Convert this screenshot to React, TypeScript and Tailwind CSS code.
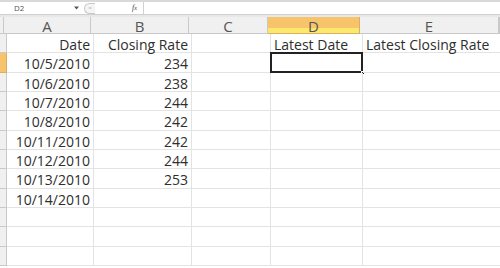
import React from "react";

const cols = [4, 87, 98, 79, 92, 139, 1];
const colLetters = ["", "A", "B", "C", "D", "E", ""];
const rowHeights = [19, 20, 19, 19, 20, 19, 19, 20, 19, 19, 20, 19];

type Cell = { t: string; align?: "left" | "right" };
const data: Record<number, Record<number, Cell>> = {
  0: { 1: { t: "Date", align: "right" }, 2: { t: "Closing Rate", align: "right" }, 4: { t: "Latest Date", align: "left" }, 5: { t: "Latest Closing Rate", align: "left" } },
  1: { 1: { t: "10/5/2010", align: "right" }, 2: { t: "234", align: "right" } },
  2: { 1: { t: "10/6/2010", align: "right" }, 2: { t: "238", align: "right" } },
  3: { 1: { t: "10/7/2010", align: "right" }, 2: { t: "244", align: "right" } },
  4: { 1: { t: "10/8/2010", align: "right" }, 2: { t: "242", align: "right" } },
  5: { 1: { t: "10/11/2010", align: "right" }, 2: { t: "242", align: "right" } },
  6: { 1: { t: "10/12/2010", align: "right" }, 2: { t: "244", align: "right" } },
  7: { 1: { t: "10/13/2010", align: "right" }, 2: { t: "253", align: "right" } },
  8: { 1: { t: "10/14/2010", align: "right" } },
};

export default function App() {
  return (
    <div
      className="w-[500px] h-[268px] overflow-hidden bg-white"
      style={{ fontFamily: '"Open Sans", "Noto Sans", sans-serif' }}
    >
      {/* formula bar */}
      <div className="h-[2px] bg-[#d9d9d9]" />
      <div className="flex h-[13px] items-center bg-white border-b border-[#d0d0d0]">
        <div className="w-[84px] h-full flex items-center justify-between pl-[14px] pr-[5px]">
          <span className="text-[8px] leading-none text-[#555]">D2</span>
          <svg width="5" height="4" viewBox="0 0 5 4"><path d="M0 0.5 L5 0.5 L2.5 3.5 Z" fill="#555" /></svg>
        </div>
        <div className="w-[59px] h-full flex items-center">
          <div className="h-[11px] w-[11px] rounded-l-full border-l border-y border-[#c8c8c8] bg-[#f4f4f4] flex items-center justify-center">
            <span className="text-[6px] leading-none text-[#bbb]">=</span>
          </div>
          <div className="flex-1" />
          <span className="text-[8px] italic leading-none text-[#444] pr-[6px]" style={{ fontFamily: '"Liberation Serif", serif' }}>
            f<span className="text-[6px]">x</span>
          </span>
        </div>
        <div className="flex-1 h-full border-l border-[#d0d0d0]" />
      </div>
      <div className="h-[2px] bg-[#e8e8e8]" />
      {/* column header */}
      <div className="flex h-[17px]">
        {cols.map((w, i) => {
          const sel = i === 4;
          return (
            <div
              key={i}
              style={{ width: w }}
              className={
                "shrink-0 h-full flex items-center justify-center border-r border-b text-[15px] leading-[16px] text-[#555] " +
                (sel
                  ? "border-[#d8b060] bg-[linear-gradient(to_bottom,#f7c46c_0px,#f7c46c_11px,#fde86e_11px,#fde86e_100%)]"
                  : "border-[#c9c9c9] bg-[#f0f0f0]")
              }
            >
              <span className="translate-y-[1px]">{colLetters[i]}</span>
            </div>
          );
        })}
      </div>
      {/* rows */}
      {rowHeights.map((h, r) => (
        <div key={r} className="flex" style={{ height: h }}>
          {cols.map((w, c) => {
            const cell = data[r]?.[c];
            const isHeader = c === 0;
            const isSelRowHeader = isHeader && r === 1;
            return (
              <div
                key={c}
                style={{ width: w }}
                className={
                  "shrink-0 h-full border-r border-b flex items-center pt-[3px] px-[3px] text-[14px] leading-none text-[#2e2e2e] whitespace-nowrap overflow-visible relative " +
                  (isHeader
                    ? isSelRowHeader
                      ? "bg-[#f7c46c] border-[#d8b060]"
                      : "bg-[#f0f0f0] border-[#c9c9c9]"
                    : c === 6
                    ? "bg-[#f0f0f0] border-[#e0e0e0]"
                    : "border-[#e3e3e3] ") +
                  (cell?.align === "right" ? " justify-end" : " justify-start")
                }
              >
                {cell?.t}
                {r === 1 && c === 4 && (
                  <div className="absolute left-[-1px] top-[-1px] w-[93px] h-[21px] border-2 border-[#222]">
                    <div className="absolute right-[-4px] bottom-[-4px] w-[4px] h-[4px] bg-[#222] border border-white" />
                  </div>
                )}
              </div>
            );
          })}
        </div>
      ))}
    </div>
  );
}
